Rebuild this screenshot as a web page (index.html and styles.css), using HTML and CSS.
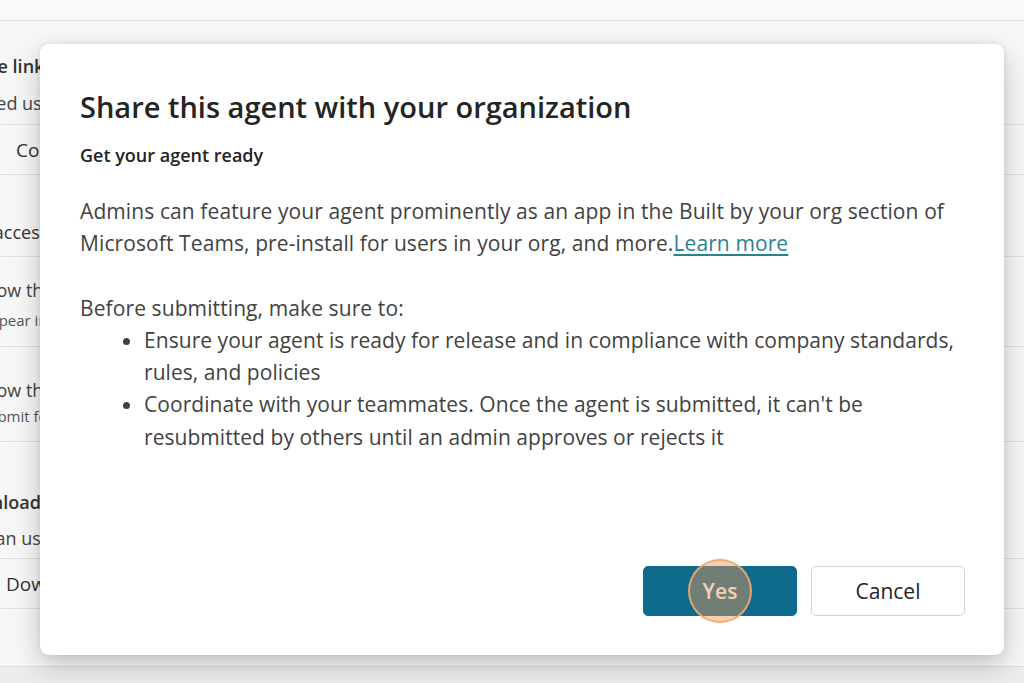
FILE: index.html
```html
<!DOCTYPE html>
<html lang="en">
<head>
    <meta charset="UTF-8">
    <meta name="viewport" content="width=device-width, initial-scale=1.0">
    <title>Share this agent with your organization</title>
    <link rel="stylesheet" href="styles.css">
</head>
<body>
    <div class="page">
        <div class="topbar"></div>
        <div class="settings">
            <div class="block first">
                <p class="row-title">Share link</p>
                <p class="row-desc">Shared users can open this agent</p>
            </div>
            <div class="btn-line"><span class="ghost-btn">Copy link</span></div>
            <div class="block heading-block">
                <p class="row-title plain">Org access</p>
            </div>
            <div class="block toggle-row">
                <p class="row-label">Allow them to use it</p>
                <p class="row-small">Appear in the store</p>
            </div>
            <div class="block toggle-row second">
                <p class="row-label">Allow them to edit</p>
                <p class="row-small">Submit for review</p>
            </div>
            <div class="block dl-block">
                <p class="row-title shift">Download</p>
                <p class="row-desc shift">Scan us to open</p>
            </div>
            <div class="btn-line"><span class="ghost-btn dl">Download</span></div>
        </div>
        <div class="footer-band"></div>
    </div>

    <div class="dialog" role="dialog" aria-labelledby="dlgTitle">
        <h1 id="dlgTitle">Share this agent with your organization</h1>
        <h2>Get your agent ready</h2>
        <p class="text">Admins can feature your agent prominently as an app in the Built by your org section of Microsoft Teams, pre-install for users in your org, and more.<a href="#">Learn more</a></p>
        <p class="text lead">Before submitting, make sure to:</p>
        <ul class="checklist">
            <li>Ensure your agent is ready for release and in compliance with company standards, rules, and policies</li>
            <li>Coordinate with your teammates. Once the agent is submitted, it can't be resubmitted by others until an admin approves or rejects it</li>
        </ul>
        <div class="actions">
            <button class="btn primary">Yes<span class="click-mark"></span></button>
            <button class="btn">Cancel</button>
        </div>
    </div>
</body>
</html>
```

FILE: styles.css
```css
* {
    margin: 0;
    padding: 0;
    box-sizing: border-box;
}

body {
    font-family: 'Open Sans', 'Noto Sans', sans-serif;
    background: #f4f4f4;
    color: #242424;
    height: 683px;
    overflow: hidden;
}

/* page behind the dialog */
.page {
    height: 683px;
    background: #f7f7f7;
}

.topbar {
    height: 21px;
    background: #fafafa;
    border-bottom: 1px solid #e2e2e2;
}

.settings {
    margin-left: -42px;
    width: 1100px;
}

.block {
    border-bottom: 1px solid #e0e0e0;
}

.block.first {
    padding-top: 31px;
    padding-bottom: 3px;
}

.row-title {
    font-size: 18px;
    font-weight: 600;
    line-height: 28px;
    color: #333;
}

.row-title.plain {
    font-weight: 500;
}

.row-desc {
    font-size: 18px;
    line-height: 36px;
    margin-top: 5px;
    color: #444;
}

.row-title.shift {
    margin-left: -5px;
}

.row-desc.shift {
    margin-left: 19px;
    margin-top: 4px;
}

.btn-line {
    height: 50px;
    border-bottom: 1px solid #e0e0e0;
    display: flex;
    align-items: center;
}

.ghost-btn {
    margin-left: 58px;
    font-size: 19px;
    color: #333;
}

.ghost-btn.dl {
    margin-left: 48px;
}

.heading-block {
    padding-top: 43px;
    padding-bottom: 10px;
}

.toggle-row {
    padding: 20px 0 11px;
}

.toggle-row.second {
    padding: 30px 0 12px;
}

.row-label {
    font-size: 18px;
    line-height: 26px;
    color: #444;
    margin-left: 18px;
}

.row-small {
    font-size: 15px;
    line-height: 30px;
    margin-top: 2px;
    color: #555;
    margin-left: 22px;
}

.second .row-small {
    line-height: 26px;
    margin-top: 0;
}

.dl-block {
    padding-top: 46px;
    padding-bottom: 2px;
}

.footer-band {
    margin-top: 57px;
    height: 20px;
    border-top: 1px solid #dedede;
    background: #ececec;
}

/* dialog */
.dialog {
    position: absolute;
    left: 40px;
    top: 44px;
    width: 964px;
    height: 611px;
    background: #fff;
    border-radius: 9px;
    padding: 41px 39px 39px 40px;
    box-shadow: 0 10px 28px rgba(0, 0, 0, 0.22), 0 0 6px rgba(0, 0, 0, 0.08);
    display: flex;
    flex-direction: column;
}

.dialog h1 {
    font-size: 29px;
    font-weight: 600;
    line-height: 44px;
    color: #242424;
    margin-bottom: 14px;
}

.dialog h2 {
    font-size: 18px;
    font-weight: 600;
    line-height: 24px;
    color: #242424;
    margin-bottom: 28px;
}

.text {
    font-size: 21px;
    line-height: 32.3px;
    letter-spacing: 0.1px;
    color: #424242;
}

.text a {
    color: #2a8291;
    text-decoration: underline;
    text-underline-offset: 3px;
}

.text.lead {
    margin-top: 32px;
}

.checklist {
    font-size: 21px;
    line-height: 32.3px;
    letter-spacing: 0.05px;
    color: #424242;
    padding-left: 64px;
}

.actions {
    margin-top: auto;
    display: flex;
    justify-content: flex-end;
    gap: 14px;
}

.btn {
    width: 154px;
    height: 50px;
    font-family: inherit;
    font-size: 21px;
    color: #242424;
    background: #fff;
    border: 1px solid #d1d1d1;
    border-radius: 5px;
    position: relative;
}

.btn.primary {
    background: #0e6b8c;
    border-color: #0e6b8c;
    color: #fff;
    font-weight: 600;
}

/* click highlight over the Yes button */
.click-mark {
    position: absolute;
    left: 44px;
    top: -8px;
    width: 64px;
    height: 64px;
    border-radius: 50%;
    border: 2px solid rgba(240, 170, 110, 0.9);
    background: rgba(236, 150, 90, 0.45);
}
```
